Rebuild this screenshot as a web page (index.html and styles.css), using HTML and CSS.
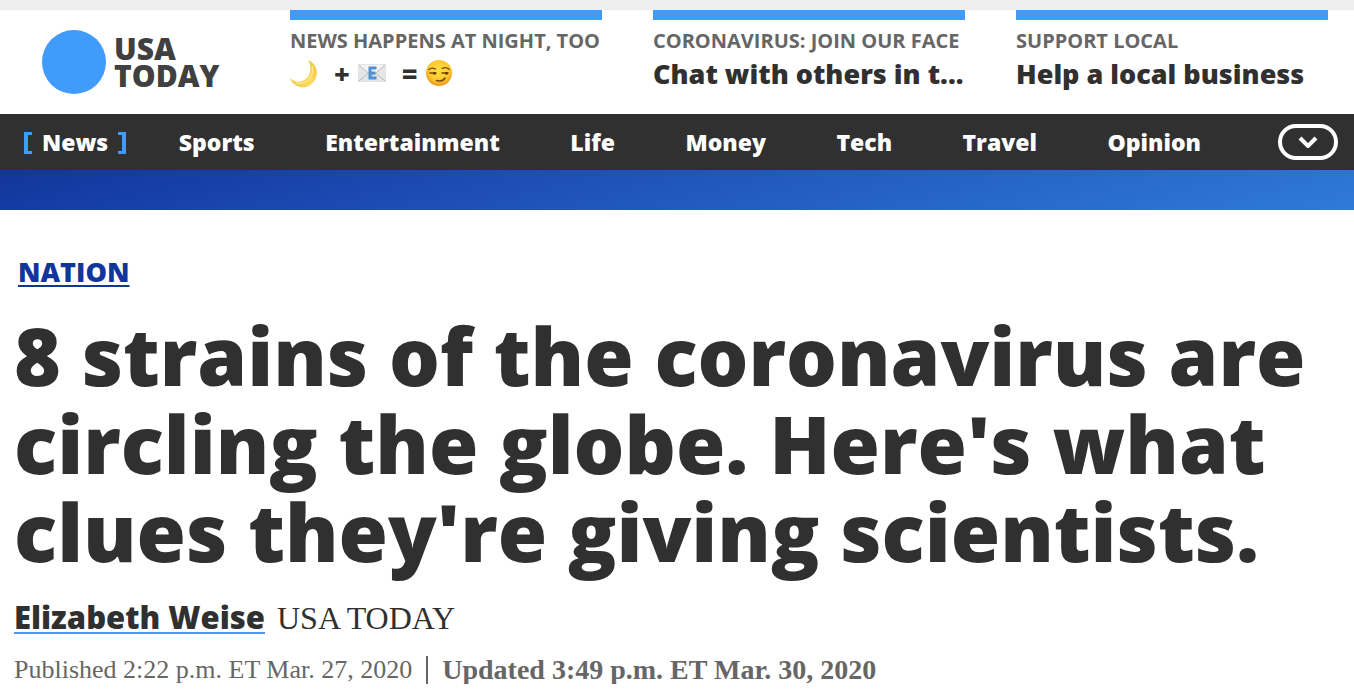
FILE: index.html
```html
<!DOCTYPE html>
<html lang="en">
<head>
    <meta charset="UTF-8">
    <meta name="viewport" content="width=device-width, initial-scale=1.0">
    <title>8 strains of the coronavirus are circling the globe</title>
    <link rel="stylesheet" href="styles.css">
</head>
<body>
    <header class="top">
        <a class="logo" href="#">
            <span class="logo-ball"></span>
            <span class="logo-text">USA<br>TODAY</span>
        </a>
        <div class="promos">
            <a class="promo" href="#">
                <span class="promo-label">NEWS HAPPENS AT NIGHT, TOO</span>
                <span class="promo-title promo-icons">
                    <svg class="icon moon" viewBox="0 0 28 28">
                        <defs>
                            <linearGradient id="moon" x1="1" y1="0" x2="0" y2="1">
                                <stop offset="0" stop-color="#f3c23c"/>
                                <stop offset=".5" stop-color="#fbdc62"/>
                                <stop offset="1" stop-color="#f2c84a"/>
                            </linearGradient>
                        </defs>
                        <path fill="url(#moon)" d="M18 0C25 3 29 10 26 17.500C23 26 14 29.500 7 26C3.500 24.500 1 21.500 0 18C4 22 10 23 15 19.500C21 15 22 7 18 0Z"/>
                        <path fill="none" stroke="#fff0a0" stroke-width="1" d="M22 6C25 16 17 25 6 23"/>
                    </svg>
                    <span class="sign">+</span>
                    <svg class="icon mail" viewBox="0 0 28 28">
                        <path fill="#e4e5e7" stroke="#d2d4d6" stroke-width=".5" d="M.5 4.500h27v17H.5z"/>
                        <path fill="#f4f4f5" d="M1 5h26L16 14.500q-2 1.500-4 0z"/>
                        <path fill="none" stroke="#aeb3b8" stroke-width=".9" d="M1 5l11 9.500q2 1.500 4 0L27 5M1 21l9.500-8M27 21l-9.500-8"/>
                        <path fill="none" stroke="#4c91d2" stroke-width="3" d="M18.500 8H12v10h6.500M12 13h5.500"/>
                    </svg>
                    <span class="sign">=</span>
                    <svg class="icon smirk" viewBox="0 0 28 28">
                        <defs>
                            <radialGradient id="face" cx=".5" cy=".4" r=".6">
                                <stop offset="0" stop-color="#ffe03a"/>
                                <stop offset=".65" stop-color="#fdc92f"/>
                                <stop offset="1" stop-color="#ee9418"/>
                            </radialGradient>
                        </defs>
                        <circle cx="13" cy="13" r="13" fill="url(#face)"/>
                        <g fill="none" stroke="#79450e" stroke-linecap="round">
                            <path stroke-width="1.300" d="M3 9.500q3-2.500 6.500-.5M16 8.500q4-2 7 .8"/>
                            <path stroke-width="1.500" d="M4 13h6M16 13h6"/>
                            <path stroke-width="1.500" d="M10.500 20.500q6 1.500 8.500-2.500"/>
                        </g>
                        <circle cx="8.500" cy="13.400" r="1.400" fill="#63380c"/>
                        <circle cx="20.500" cy="13.400" r="1.400" fill="#63380c"/>
                    </svg>
                </span>
            </a>
            <a class="promo" href="#">
                <span class="promo-label">CORONAVIRUS: JOIN OUR FACE</span>
                <span class="promo-title">Chat with others in t...</span>
            </a>
            <a class="promo" href="#">
                <span class="promo-label">SUPPORT LOCAL</span>
                <span class="promo-title">Help a local business</span>
            </a>
        </div>
    </header>
    <nav class="nav">
        <div class="nav-links">
            <a class="active" href="#">News</a>
            <a href="#">Sports</a>
            <a href="#">Entertainment</a>
            <a href="#">Life</a>
            <a href="#">Money</a>
            <a href="#">Tech</a>
            <a href="#">Travel</a>
            <a href="#">Opinion</a>
        </div>
        <button class="more" aria-label="More">
            <svg viewBox="0 0 20 12"><path d="M2 2l8 8 8-8"/></svg>
        </button>
    </nav>
    <div class="strip"></div>
    <main class="article">
        <a class="section" href="#">NATION</a>
        <h1>8 strains of the coronavirus are circling the globe. Here's what clues they're giving scientists.</h1>
        <p class="byline"><a href="#">Elizabeth Weise</a><span>USA TODAY</span></p>
        <p class="dates"><span>Published 2:22 p.m. ET Mar. 27, 2020</span><b>Updated 3:49 p.m. ET Mar. 30, 2020</b></p>
    </main>
</body>
</html>
```
FILE: styles.css
```css
body{
    margin: 0;
    background: #fff;
    color: #303030;
    font-family: "Open Sans", "Noto Sans", sans-serif;
}
a{
    color: inherit;
    text-decoration: none;
}
.top{
    display: flex;
    height: 104px;
    border-top: 10px solid #efefef;
}
.logo{
    display: flex;
    box-sizing: border-box;
    flex: 0 0 290px;
    gap: 8px;
    padding: 20px 0 0 42px;
    color: #404040;
}
.logo-ball{
    width: 64px;
    height: 64px;
    border-radius: 50%;
    background: #409bfa;
}
.logo-text{
    padding-top: 5px;
    font-size: 30px;
    line-height: 27px;
    font-weight: 800;
}
.promos{
    display: grid;
    flex: 1;
    grid-template-columns: repeat(3, minmax(0, 1fr));
    gap: 51px;
    padding-right: 26px;
}
.promo{
    border-top: 10px solid #409bfa;
    overflow: hidden;
    white-space: nowrap;
}
.promo-label{
    display: block;
    margin-top: 7px;
    color: #666;
    font-size: 20px;
    line-height: 28px;
    font-weight: 700;
}
.promo-title{
    display: block;
    font-size: 27px;
    line-height: 38px;
    font-weight: 800;
}
.promo-icons{
    display: flex;
    align-items: center;
}
.icon{
    width: 28px;
    height: 28px;
}
.sign{
    margin: 0 8px 0 16px;
}
.nav{
    display: flex;
    align-items: center;
    height: 56px;
    padding: 0 16px 0 42px;
    background: #303030;
    color: #fff;
    font-size: 23px;
    font-weight: 800;
}
.nav-links{
    display: flex;
    flex: 1;
    justify-content: space-between;
    line-height: 32px;
}
.active{
    position: relative;
}
.active::before,
.active::after{
    content: "";
    position: absolute;
    top: 6px;
    width: 4px;
    height: 16px;
    border: 3px solid #409bfa;
    border-width: 3px 4px;
}
.active::before{
    right: 100%;
    margin-right: 10px;
    border-right: 0;
}
.active::after{
    left: 100%;
    margin-left: 10px;
    border-left: 0;
}
.more{
    display: flex;
    align-items: center;
    justify-content: center;
    width: 60px;
    height: 36px;
    margin-left: 77px;
    padding: 0;
    border: 4px solid #fff;
    border-radius: 18px;
    background: none;
}
.more svg{
    width: 20px;
    height: 12px;
    fill: none;
    stroke: #fff;
    stroke-width: 4;
}
.strip{
    height: 40px;
    background: linear-gradient(165deg, #12359b, #1e50b8 40%, #2f7ada);
}
.article{
    padding: 43px 14px 0;
}
.section{
    margin-left: 4px;
    color: #12359b;
    font-size: 27px;
    line-height: 38px;
    font-weight: 800;
    text-decoration: underline;
    text-decoration-thickness: 2px;
    text-underline-offset: 3px;
}
h1{
    margin: 20px 0;
    font-size: 80px;
    line-height: 88px;
    font-weight: 800;
}
.byline{
    margin: 0;
    font-size: 31px;
    line-height: 44px;
}
.byline a{
    margin-right: 12px;
    font-weight: 800;
    text-decoration: underline #409bfa 2px;
    text-underline-offset: 3px;
}
.byline span{
    font-family: "Liberation Serif", serif;
    font-size: 32px;
}
.dates{
    display: flex;
    align-items: center;
    margin: 16px 0 0;
    color: #666;
    font-family: "Liberation Serif", serif;
    font-size: 26px;
    line-height: 28px;
}
.dates b{
    margin-left: 14px;
    padding-left: 14px;
    border-left: 2px solid #666;
    font-size: 28px;
}
```
